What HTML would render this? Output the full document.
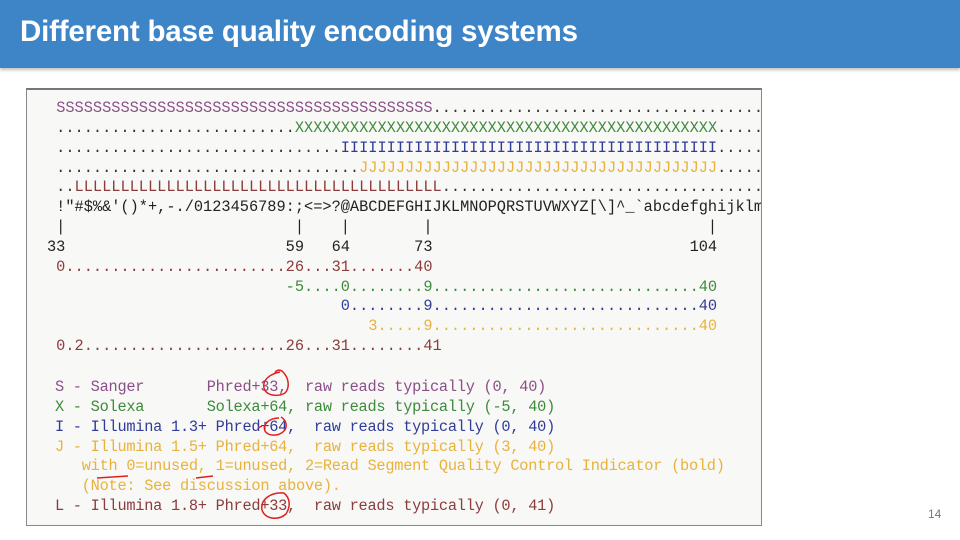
<!DOCTYPE html>
<html><head><meta charset="utf-8"><style>
body{margin:0;width:960px;height:540px;background:#fff;position:relative;overflow:hidden;font-family:"Liberation Sans",sans-serif}
.hd{position:absolute;left:0;top:0;width:960px;height:68px;background:#3e85c7;box-shadow:0 2px 3px rgba(0,0,0,.25)}
.hd h1{margin:0;position:absolute;left:20px;top:15px;font-size:29.5px;font-weight:bold;color:#fff;letter-spacing:-0.2px;white-space:nowrap}
.box{position:absolute;left:26px;top:88px;width:734px;height:435px;background:#f8f8f7;border:1px solid #888;border-top:2px solid #777;overflow:hidden}
pre{margin:0;position:absolute;left:20px;top:9px;font-family:"Liberation Mono",monospace;font-size:15.3px;letter-spacing:0;line-height:19.85px;color:#333;white-space:pre}
.b{position:absolute;left:19px;top:288px;letter-spacing:-0.25px}
.s{color:#8a4f88}.x{color:#3d8b3a}.i{color:#303c98}.j{color:#e8b23c}.l{color:#8c3c3c}.k{color:#222}
.pn{position:absolute;left:928px;top:507px;font-size:12px;color:#777}
svg{position:absolute;left:0;top:0}
</style></head><body>
<div class="hd"><h1>Different base quality encoding systems</h1></div>
<div class="box"><pre> <span class="s">SSSSSSSSSSSSSSSSSSSSSSSSSSSSSSSSSSSSSSSSS</span>.....................................................
 ..........................<span class="x">XXXXXXXXXXXXXXXXXXXXXXXXXXXXXXXXXXXXXXXXXXXXXX</span>......................
 ...............................<span class="i">IIIIIIIIIIIIIIIIIIIIIIIIIIIIIIIIIIIIIIIII</span>......................
 .................................<span class="j">JJJJJJJJJJJJJJJJJJJJJJJJJJJJJJJJJJJJJJJ</span>......................
 ..<span class="l">LLLLLLLLLLLLLLLLLLLLLLLLLLLLLLLLLLLLLLLL</span>....................................................
<span class="k"> !"#$%&amp;'()*+,-./0123456789:;&lt;=&gt;?@ABCDEFGHIJKLMNOPQRSTUVWXYZ[\]^_`abcdefghijklmnopqrstuvwxyz{|}~</span>
<span class="k"> |                         |    |        |                              |</span>
<span class="k">33                        59   64       73                            104</span>
<span class="l"> 0........................26...31.......40</span>
<span class="x">                          -5....0........9.............................40</span>
<span class="i">                                0........9.............................40</span>
<span class="j">                                   3.....9.............................40</span>
<span class="l"> 0.2......................26...31........41</span></pre>
<pre class="b"> <span class="s">S - Sanger       Phred+33,  raw reads typically (0, 40)</span>
 <span class="x">X - Solexa       Solexa+64, raw reads typically (-5, 40)</span>
 <span class="i">I - Illumina 1.3+ Phred+64,  raw reads typically (0, 40)</span>
 <span class="j">J - Illumina 1.5+ Phred+64,  raw reads typically (3, 40)</span>
 <span class="j">   with 0=unused, 1=unused, 2=Read Segment Quality Control Indicator (bold)</span>
 <span class="j">   (Note: See discussion above).</span>
 <span class="l">L - Illumina 1.8+ Phred+33,  raw reads typically (0, 41)</span></pre></div>
<svg width="960" height="540" fill="none" stroke="#e02020" stroke-width="1.5">
<path d="M280 372 C270 374 262 380 264 388 C266 396 278 397 285 393 C290 388 289 378 283 372 C280 369 276 370 275 373"/>
<path d="M279 418 C270 418 262 424 265 431 C268 436 278 437 284 431 C288 426 286 420 281 417 M258 428 L262 426"/>
<path d="M284 493 C270 492 260 500 262 510 C265 519 278 521 286 514 C291 506 290 498 284 493"/>
<path d="M97 478 L128 476"/><path d="M196 478 L213 476"/>
</svg>
<div class="pn">14</div>
</body></html>
